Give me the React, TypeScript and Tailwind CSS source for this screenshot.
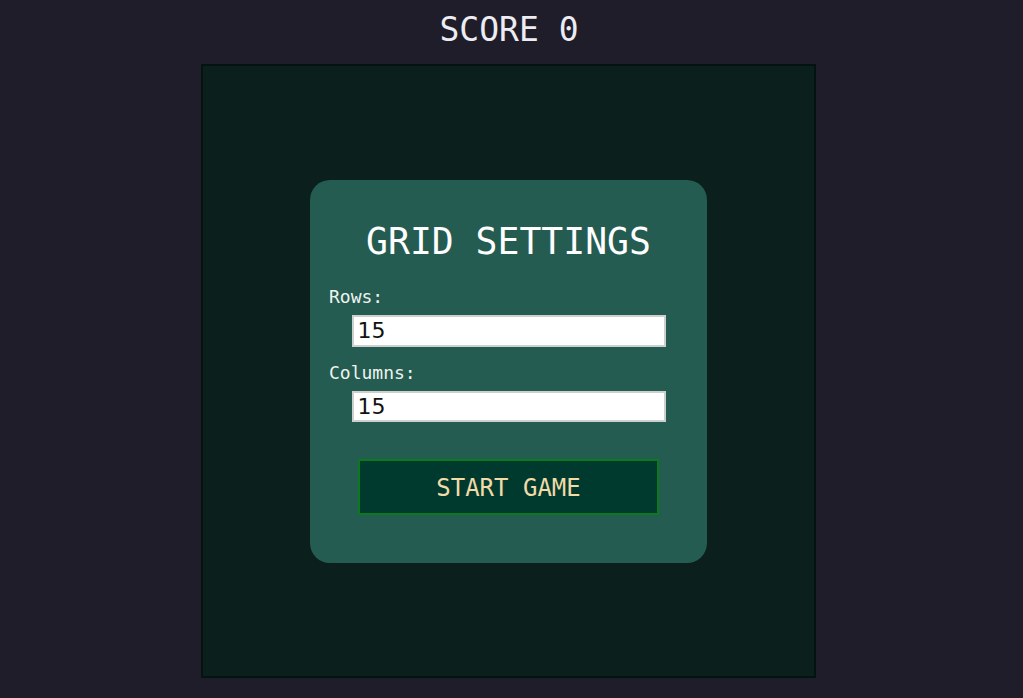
import { useState } from "react";

export default function App() {
  const [rows, setRows] = useState("15");
  const [cols, setCols] = useState("15");

  return (
    <div className="min-h-[698px] bg-[#201d2b] flex flex-col items-center pr-[6px] font-['DejaVu_Sans_Mono',monospace]">
      <div className="h-[64px] flex items-center justify-center text-[33px] leading-[38px] text-[#ececf2] pb-[5px] pl-[1px]">
        SCORE 0
      </div>

      <div className="w-[615px] h-[614px] bg-[#0b1f1d] border-2 border-[#041310] flex items-center justify-center">
        <div className="w-[397px] h-[383px] rounded-[20px] bg-[#255c52] px-[19px] pt-[41px] flex flex-col">
          <h2 className="text-center text-[36.4px] leading-[42px] text-white">GRID SETTINGS</h2>

          <label className="mt-[23px] text-[18px] leading-[21px] text-[#eef3ee]">Rows:</label>
          <input
            value={rows}
            onChange={(e) => setRows(e.target.value)}
            className="mt-[8px] mx-auto block w-[314px] h-[32px] bg-white border-2 border-[#cdd0cd] pl-[4px] text-[22px] text-[#111] font-['DejaVu_Sans',sans-serif] outline-none"
          />

          <label className="mt-[15px] text-[18px] leading-[21px] text-[#eef3ee]">Columns:</label>
          <input
            value={cols}
            onChange={(e) => setCols(e.target.value)}
            className="mt-[8px] mx-auto block w-[314px] h-[31px] bg-white border-2 border-[#cdd0cd] pl-[4px] text-[22px] text-[#111] font-['DejaVu_Sans',sans-serif] outline-none"
          />

          <button
            type="button"
            className="mt-[37px] mx-auto w-[301px] h-[56px] bg-[#003a2f] border-2 border-[#0b7a1d] text-[24px] text-[#f2dba7] pt-[2px]"
          >
            START GAME
          </button>
        </div>
      </div>
    </div>
  );
}
